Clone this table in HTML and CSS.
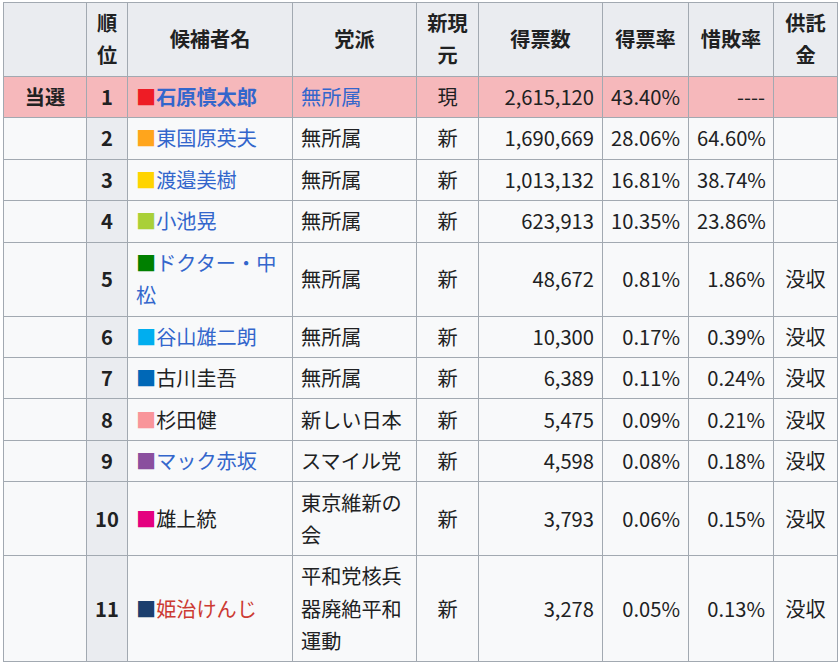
FILE: index.html
```html
<!DOCTYPE html>
<html lang="ja">
<head>
<meta charset="utf-8">
<title>選挙結果</title>
<link rel="stylesheet" href="styles.css">
</head>
<body>
<table class="results">
  <colgroup>
    <col class="c-status"><col class="c-rank"><col class="c-name"><col class="c-party"><col class="c-new"><col class="c-votes"><col class="c-rate"><col class="c-loss"><col class="c-dep">
  </colgroup>
  <thead>
    <tr>
      <th></th><th>順位</th><th>候補者名</th><th>党派</th><th>新現元</th><th>得票数</th><th>得票率</th><th>惜敗率</th><th>供託金</th>
    </tr>
  </thead>
  <tbody>
    <tr class="win">
      <th class="status">当選</th><th class="rank">1</th>
      <td><span class="sq" style="color:#ee1c25">■</span><a class="link strong">石原慎太郎</a></td>
      <td><a class="link">無所属</a></td><td class="c">現</td><td class="r">2,615,120</td><td class="r">43.40%</td><td class="r">----</td><td class="c"></td>
    </tr>
    <tr>
      <td></td><th class="rank">2</th>
      <td><span class="sq" style="color:#ffa51c">■</span><a class="link">東国原英夫</a></td>
      <td>無所属</td><td class="c">新</td><td class="r">1,690,669</td><td class="r">28.06%</td><td class="r">64.60%</td><td class="c"></td>
    </tr>
    <tr>
      <td></td><th class="rank">3</th>
      <td><span class="sq" style="color:#ffd400">■</span><a class="link">渡邉美樹</a></td>
      <td>無所属</td><td class="c">新</td><td class="r">1,013,132</td><td class="r">16.81%</td><td class="r">38.74%</td><td class="c"></td>
    </tr>
    <tr>
      <td></td><th class="rank">4</th>
      <td><span class="sq" style="color:#a9d038">■</span><a class="link">小池晃</a></td>
      <td>無所属</td><td class="c">新</td><td class="r">623,913</td><td class="r">10.35%</td><td class="r">23.86%</td><td class="c"></td>
    </tr>
    <tr>
      <td></td><th class="rank">5</th>
      <td><span class="sq" style="color:#008000">■</span><a class="link">ドクター・中松</a></td>
      <td>無所属</td><td class="c">新</td><td class="r">48,672</td><td class="r">0.81%</td><td class="r">1.86%</td><td class="c">没収</td>
    </tr>
    <tr>
      <td></td><th class="rank">6</th>
      <td><span class="sq" style="color:#00aeef">■</span><a class="link">谷山雄二朗</a></td>
      <td>無所属</td><td class="c">新</td><td class="r">10,300</td><td class="r">0.17%</td><td class="r">0.39%</td><td class="c">没収</td>
    </tr>
    <tr>
      <td></td><th class="rank">7</th>
      <td><span class="sq" style="color:#0068b7">■</span>古川圭吾</td>
      <td>無所属</td><td class="c">新</td><td class="r">6,389</td><td class="r">0.11%</td><td class="r">0.24%</td><td class="c">没収</td>
    </tr>
    <tr>
      <td></td><th class="rank">8</th>
      <td><span class="sq" style="color:#f9959a">■</span>杉田健</td>
      <td>新しい日本</td><td class="c">新</td><td class="r">5,475</td><td class="r">0.09%</td><td class="r">0.21%</td><td class="c">没収</td>
    </tr>
    <tr>
      <td></td><th class="rank">9</th>
      <td><span class="sq" style="color:#8a4f9e">■</span><a class="link">マック赤坂</a></td>
      <td>スマイル党</td><td class="c">新</td><td class="r">4,598</td><td class="r">0.08%</td><td class="r">0.18%</td><td class="c">没収</td>
    </tr>
    <tr>
      <td></td><th class="rank">10</th>
      <td><span class="sq" style="color:#e4007f">■</span>雄上統</td>
      <td>東京維新の会</td><td class="c">新</td><td class="r">3,793</td><td class="r">0.06%</td><td class="r">0.15%</td><td class="c">没収</td>
    </tr>
    <tr>
      <td></td><th class="rank">11</th>
      <td><span class="sq" style="color:#1b3f6e">■</span><a class="link new">姫治けんじ</a></td>
      <td>平和党核兵器廃絶平和運動</td><td class="c">新</td><td class="r">3,278</td><td class="r">0.05%</td><td class="r">0.13%</td><td class="c">没収</td>
    </tr>
  </tbody>
</table>
</body>
</html>
```

FILE: styles.css
```css
html, body {
  margin: 0;
  padding: 0;
  background: #ffffff;
}

body {
  padding: 2px 0 0 3px;
  font-family: "Noto Sans CJK JP", "Noto Sans", sans-serif;
  font-size: 20.16px;
  line-height: 32.3px;
  color: #202122;
}

.results {
  border-collapse: collapse;
  table-layout: fixed;
  width: 834px;
  background: #f8f9fa;
  border: 1px solid #a2a9b1;
}

.c-status { width: 83px; }
.c-rank { width: 41px; }
.c-name { width: 165px; }
.c-party { width: 124px; }
.c-new { width: 62px; }
.c-votes { width: 124px; }
.c-rate { width: 86px; }
.c-loss { width: 85px; }
.c-dep { width: 64px; }

.results th,
.results td {
  border: 1px solid #a2a9b1;
  padding: 4.1px 8px;
  vertical-align: middle;
  font-weight: normal;
  text-align: left;
}

.results thead th {
  background: #eaecf0;
  font-weight: bold;
  text-align: center;
}

.results th.rank {
  background: #eaecf0;
  font-weight: bold;
  text-align: center;
}

.results th.status {
  font-weight: bold;
  text-align: center;
}

.results tr.win th,
.results tr.win td {
  background: #f6b8bb;
}

.results td.c { text-align: center; }
.results td.r { text-align: right; }

.sq {
  font-size: 20.16px;
}

.link {
  color: #3366cc;
  text-decoration: none;
}

.link.strong { font-weight: bold; }

.link.new { color: #cc3b33; }
```
